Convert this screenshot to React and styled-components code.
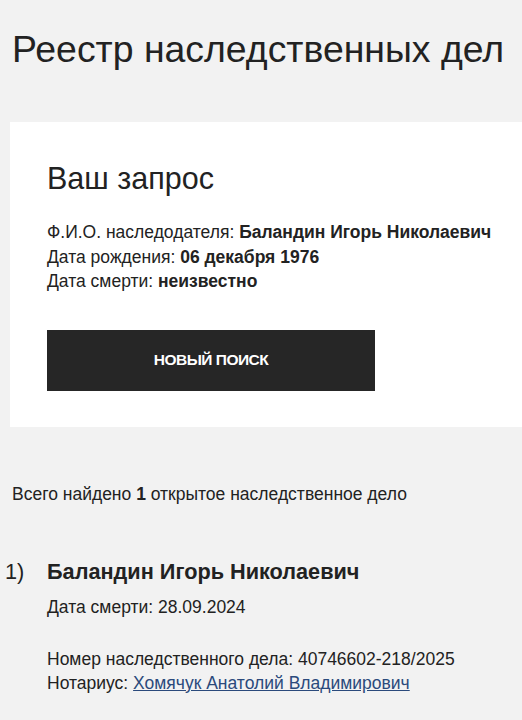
import React from "react";
import styled, { createGlobalStyle } from "styled-components";

const Global = createGlobalStyle`
  html, body {
    margin: 0;
    padding: 0;
    background: #f2f2f2;
  }
  body {
    font-family: "Liberation Sans", Arial, sans-serif;
    color: #222;
  }
`;

const Page = styled.div`
  padding: 27px 0 0 12px;
  overflow: hidden;
`;

const Title = styled.h1`
  margin: 0;
  font-size: 37.4px;
  font-weight: 400;
  line-height: 44px;
  white-space: nowrap;
`;

const Card = styled.section`
  margin: 51px 0 0 -2px;
  background: #fff;
  padding: 38px 0 36px 37px;
`;

const CardTitle = styled.h2`
  margin: 0 0 24px;
  font-size: 30.5px;
  font-weight: 400;
  line-height: 36px;
`;

const Line = styled.div`
  font-size: 17.5px;
  line-height: 24.5px;
  white-space: nowrap;
  b {
    font-weight: 700;
  }
`;

const Button = styled.button`
  display: block;
  margin-top: 36px;
  width: 328px;
  height: 61px;
  border: 0;
  background: #262626;
  color: #fff;
  font-family: "Liberation Sans", Arial, sans-serif;
  font-size: 15.5px;
  font-weight: 700;
  letter-spacing: -0.5px;
  cursor: pointer;
`;

const Summary = styled.p`
  margin: 55px 0 0;
  font-size: 17.5px;
  line-height: 24px;
`;

const Item = styled.div`
  display: grid;
  grid-template-columns: 42px 1fr;
  margin: 51px 0 0 -7px;
`;

const Index = styled.div`
  font-size: 21.7px;
  line-height: 30px;
`;

const ItemName = styled.div`
  font-size: 21.7px;
  font-weight: 700;
  line-height: 30px;
`;

const Detail = styled.div`
  font-size: 17.5px;
  line-height: 24px;
  white-space: nowrap;
  margin-top: ${(p) => p.$gap || 0}px;
`;

const Link = styled.a`
  color: #2b4a7c;
  text-decoration: underline;
`;

export default function App() {
  return (
    <>
      <Global />
      <Page>
        <Title>Реестр наследственных дел</Title>
        <Card>
          <CardTitle>Ваш запрос</CardTitle>
          <Line>
            Ф.И.О. наследодателя: <b>Баландин Игорь Николаевич</b>
          </Line>
          <Line>
            Дата рождения: <b>06 декабря 1976</b>
          </Line>
          <Line>
            Дата смерти: <b>неизвестно</b>
          </Line>
          <Button>НОВЫЙ ПОИСК</Button>
        </Card>
        <Summary>
          Всего найдено <b>1</b> открытое наследственное дело
        </Summary>
        <Item>
          <Index>1)</Index>
          <div>
            <ItemName>Баландин Игорь Николаевич</ItemName>
            <Detail $gap={8}>Дата смерти: 28.09.2024</Detail>
            <Detail $gap={28}>Номер наследственного дела: 40746602-218/2025</Detail>
            <Detail>
              Нотариус: <Link href="#">Хомячук Анатолий Владимирович</Link>
            </Detail>
          </div>
        </Item>
      </Page>
    </>
  );
}
